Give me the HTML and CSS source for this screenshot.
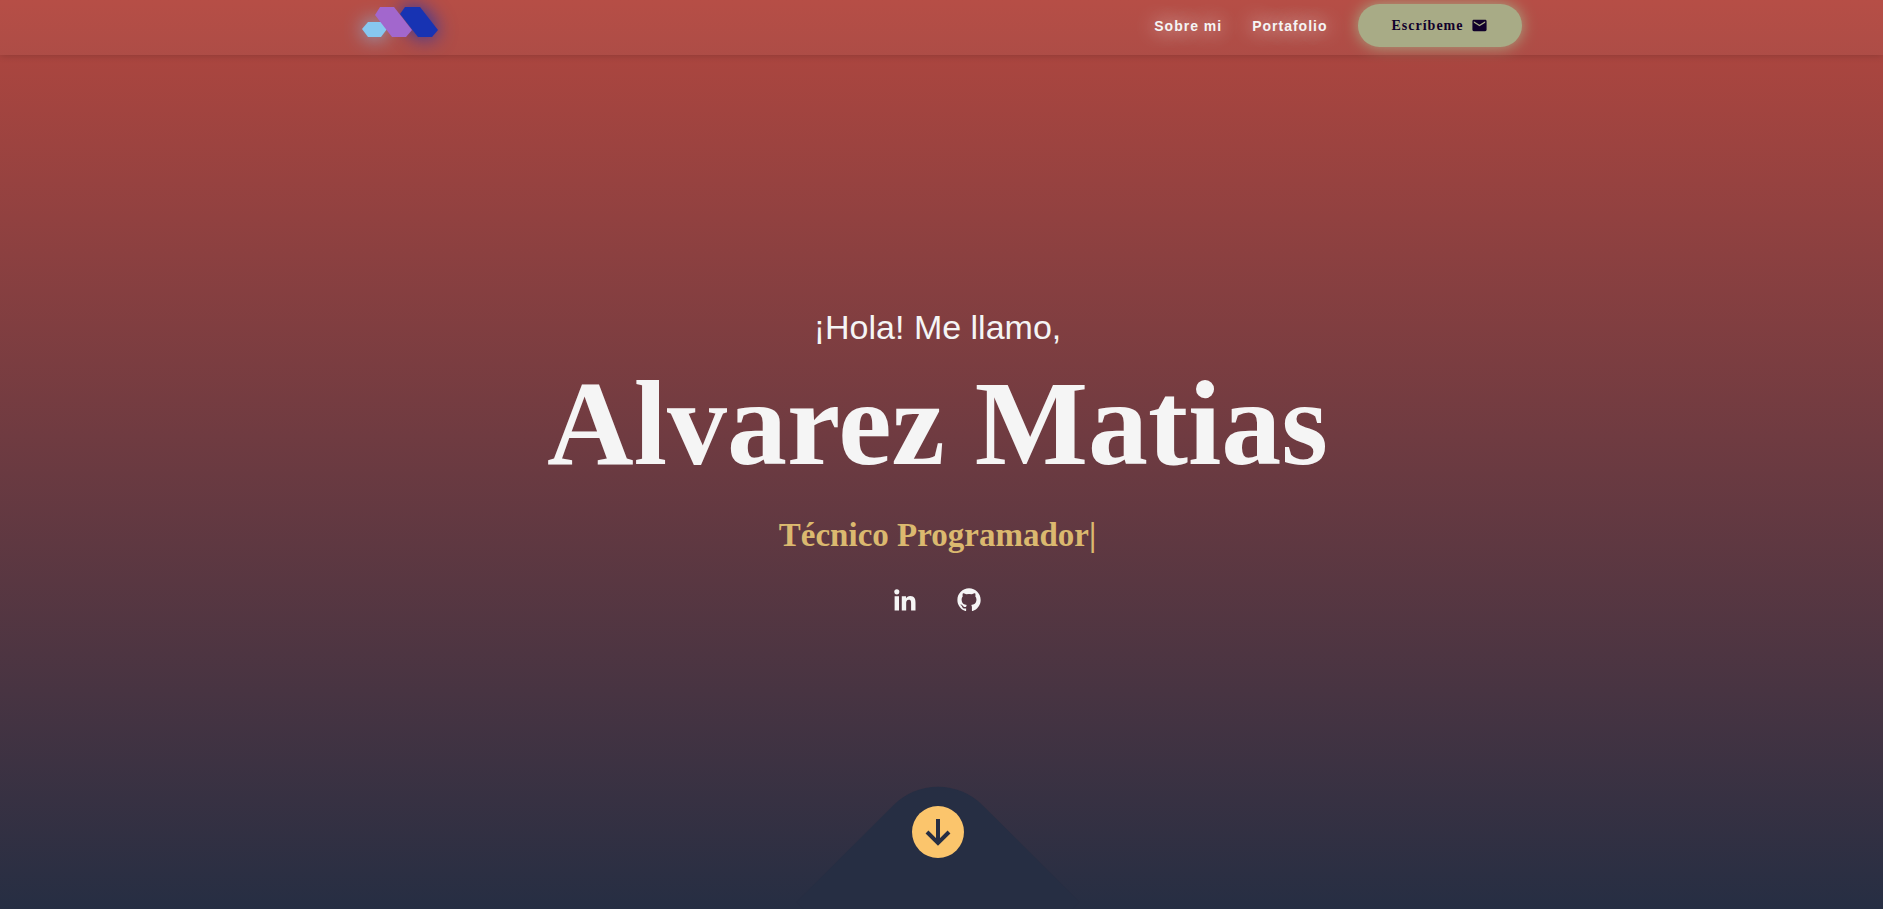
FILE: index.html
```html
<!DOCTYPE html>
<html lang="es">
<head>
<meta charset="utf-8">
<meta name="viewport" content="width=device-width, initial-scale=1">
<title>Alvarez Matias</title>
<link rel="stylesheet" href="styles.css">
</head>
<body>
<header class="header">
  <div class="header-inner">
    <a class="logo" href="#inicio" aria-label="Inicio">
      <svg viewBox="0 0 77 30" width="77" height="30" aria-hidden="true">
        <path class="logo-blue" d="M38 7 43 0H58L76 23 70 30H56Z"/>
        <path class="logo-sky" d="M0 22 6 15H20L25 22 19 30H6Z"/>
        <path class="logo-purple" d="M13 8 18 0H32L50 23 44 30H30Z"/>
      </svg>
    </a>
    <nav class="nav">
      <a class="nav-link" href="#sobre-mi">Sobre mi</a>
      <a class="nav-link" href="#portafolio">Portafolio</a>
      <a class="nav-button" href="#contacto">Escríbeme
        <svg viewBox="0 0 24 24" width="17" height="17" fill="currentColor" aria-hidden="true"><path d="M20 4H4c-1.100 0-2 .9-2 2v12c0 1.100.9 2 2 2h16c1.100 0 2-.9 2-2V6c0-1.100-.9-2-2-2zm0 4-8 5-8-5V6l8 5 8-5z"/></svg>
      </a>
    </nav>
  </div>
</header>
<main class="hero" id="inicio">
  <div class="hero-content">
    <p class="greeting">¡Hola! Me llamo,</p>
    <h1 class="name">Alvarez Matias</h1>
    <h2 class="role">Técnico Programador|</h2>
    <div class="social">
      <a href="#linkedin" aria-label="LinkedIn"><svg viewBox="0 0 24 24" width="28" height="28" fill="currentColor" aria-hidden="true"><circle cx="4.983" cy="5.009" r="2.188"/><path d="M9.237 8.855v12.139h3.769v-6.003c0-1.584.298-3.118 2.262-3.118 1.937 0 1.961 1.811 1.961 3.218v5.904H21v-6.657c0-3.270-.704-5.783-4.526-5.783-1.835 0-3.065 1.007-3.568 1.960h-.051v-1.660H9.237zm-6.142 0H6.870v12.139H3.095z"/></svg></a>
      <a href="#github" aria-label="GitHub"><svg viewBox="0 0 24 24" width="28" height="28" fill="currentColor" aria-hidden="true"><path d="M12.026 2c-5.509 0-9.974 4.465-9.974 9.974 0 4.406 2.857 8.145 6.821 9.465.499.09.679-.217.679-.481 0-.237-.008-.865-.011-1.696-2.775.602-3.361-1.338-3.361-1.338-.452-1.152-1.107-1.459-1.107-1.459-.905-.619.069-.605.069-.605 1.002.07 1.527 1.028 1.527 1.028.89 1.524 2.336 1.084 2.902.829.091-.645.351-1.085.635-1.334-2.214-.251-4.542-1.107-4.542-4.930 0-1.087.389-1.979 1.024-2.675-.101-.253-.446-1.268.099-2.640 0 0 .837-.269 2.742 1.021a9.582 9.582 0 0 1 2.496-.336 9.554 9.554 0 0 1 2.496.336c1.906-1.291 2.742-1.021 2.742-1.021.545 1.372.203 2.387.099 2.640.64.696 1.024 1.587 1.024 2.675 0 3.833-2.330 4.675-4.552 4.922.355.308.675.916.675 1.846 0 1.334-.012 2.410-.012 2.737 0 .267.178.577.687.479C19.146 20.115 22 16.379 22 11.974 22 6.465 17.535 2 12.026 2z"/></svg></a>
    </div>
  </div>
  <a class="scroll-down" href="#sobre-mi" aria-label="Bajar">
    <svg viewBox="0 0 52 52" width="52" height="52" aria-hidden="true"><circle class="scroll-disc" cx="26" cy="26" r="26"/><path class="scroll-arrow" d="M26 13V37M15 26 26 37 37 26"/></svg>
  </a>
</main>
</body>
</html>
```

FILE: styles.css
```css
* {
  box-sizing: border-box;
}

body {
  margin: 0;
  min-height: 100vh;
  display: flex;
  flex-direction: column;
  background: linear-gradient(#b3473f, #262e43);
  color: #f5f5f5;
  font-family: "Liberation Sans", Arial, sans-serif;
}

a {
  color: inherit;
  text-decoration: none;
}

svg {
  display: block;
}

.header {
  background: rgba(255, 255, 255, 0.04);
  box-shadow: 0 0 8px rgba(0, 0, 0, 0.2);
}

.header-inner {
  display: flex;
  align-items: flex-start;
  justify-content: space-between;
  max-width: 1160px;
  height: 55px;
  margin: 0 auto;
  padding-top: 4px;
}

.logo {
  padding-top: 3px;
}

.logo svg {
  overflow: visible;
}

.logo-blue {
  fill: #1733b3;
  filter: drop-shadow(0 0 10px #1733b3);
}

.logo-purple {
  fill: #a267cd;
}

.logo-sky {
  fill: #87c8f0;
  filter: drop-shadow(0 0 10px #87c8f0);
}

.nav {
  display: flex;
  align-items: center;
  gap: 30px;
  font-size: 14px;
  font-weight: 700;
  letter-spacing: 1px;
}

.nav-link {
  text-shadow: 0 0 20px #fff;
}

.nav-button {
  display: flex;
  align-items: center;
  gap: 7px;
  height: 43px;
  padding: 0 34px;
  border-radius: 22px;
  background: #a8ab86;
  box-shadow: 0 0 15px #a8ab86;
  color: #10002b;
  font-family: "Liberation Serif", "Times New Roman", serif;
}

.hero {
  flex: 1;
  display: flex;
  flex-direction: column;
  align-items: center;
  padding: 60px 8px 51px 0;
  overflow: hidden;
}

.hero-content {
  flex: 1;
  display: flex;
  flex-direction: column;
  align-items: center;
  justify-content: center;
  text-align: center;
}

.greeting {
  margin: 0;
  font-size: 34px;
  line-height: 40px;
}

.name {
  margin: 17px 0 31px;
  font: 700 120px/120px "Liberation Serif", "Times New Roman", serif;
}

.role {
  margin: 0 0 31px;
  color: #dbb96f;
  font: 700 33px/40px "Liberation Serif", "Times New Roman", serif;
}

.social {
  display: flex;
  gap: 36px;
}

.scroll-down {
  display: grid;
  place-items: center;
  position: relative;
}

.scroll-down::before {
  content: "";
  position: absolute;
  top: -4px;
  width: 200px;
  height: 200px;
  border-top-left-radius: 63px;
  background: #262e43;
  transform: rotate(45deg);
}

.scroll-down svg {
  position: relative;
}

.scroll-disc {
  fill: #fbc56c;
}

.scroll-arrow {
  fill: none;
  stroke: #262e43;
  stroke-width: 4;
}
```
